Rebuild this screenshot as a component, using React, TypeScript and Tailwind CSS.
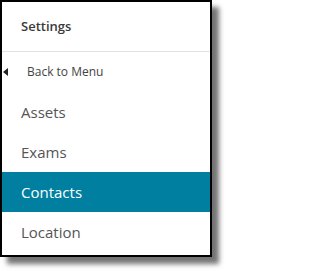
export default function App() {
  const items = ["Assets", "Exams", "Contacts", "Location"];
  return (
    <div className="w-[226px] h-[271px] bg-white font-['Open_Sans',sans-serif]">
      <div className="w-[212px] h-[257px] border-2 border-black bg-white shadow-[7px_7px_5px_rgba(0,0,0,0.55)] flex flex-col">
        <div className="h-[50px] flex items-center pl-[19px] text-[13px] font-semibold text-[#3a3a3a] border-b border-[#e2e2e2]">
          Settings
        </div>
        <div className="h-[40px] flex items-center text-[12px] text-[#444]">
          <span className="w-0 h-0 ml-[1px] border-y-[4px] border-y-transparent border-r-[5px] border-r-[#222]" />
          <span className="ml-[19px]">Back to Menu</span>
        </div>
        {items.map((it) => (
          <div
            key={it}
            className={
              it === "Contacts"
                ? "h-[40px] flex items-center pl-[19px] text-[15px] text-white bg-[#007fa1]"
                : "h-[40px] flex items-center pl-[19px] text-[15px] text-[#555]"
            }
          >
            {it}
          </div>
        ))}
      </div>
    </div>
  );
}
